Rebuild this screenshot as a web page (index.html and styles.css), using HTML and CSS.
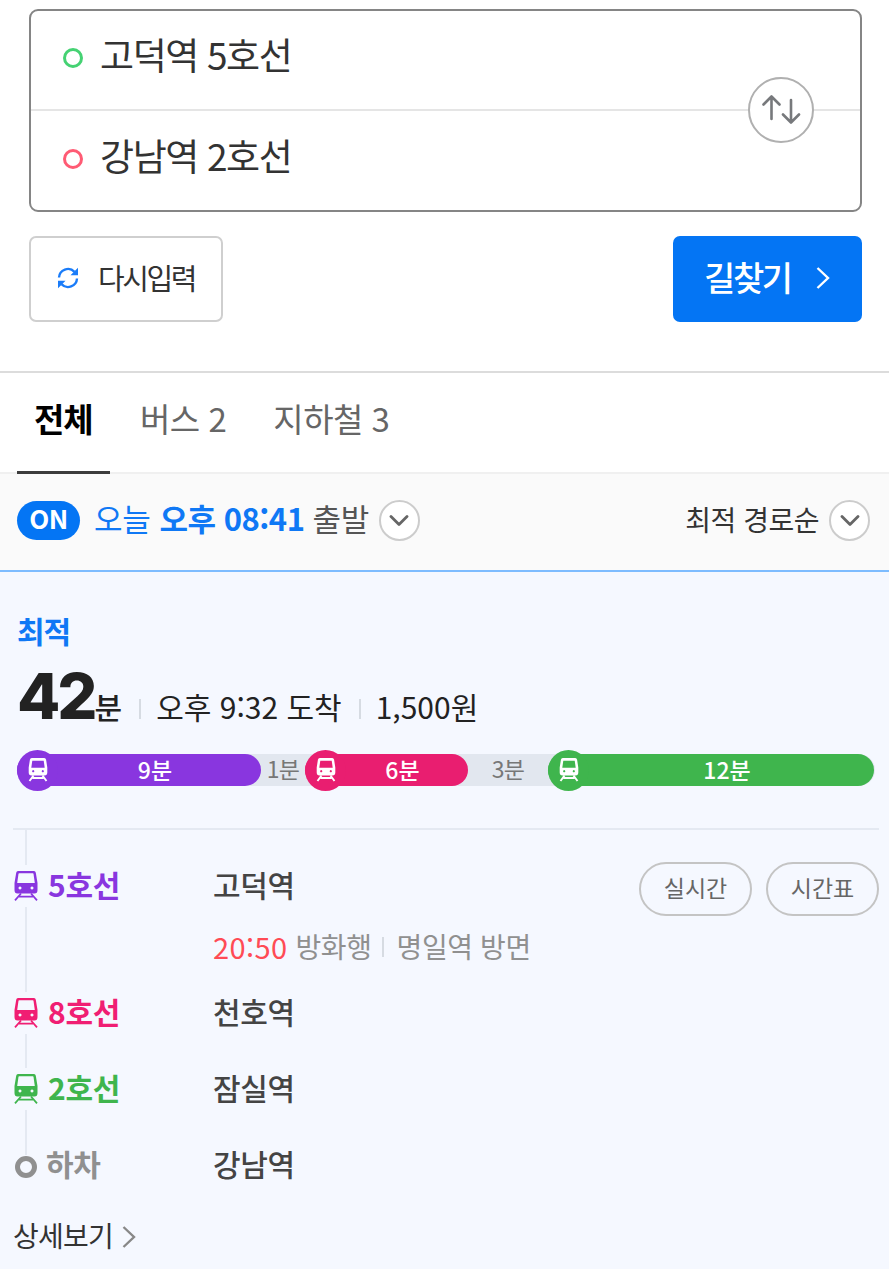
FILE: index.html
```html
<!DOCTYPE html>
<html lang="ko">
<head>
    <meta charset="UTF-8">
    <meta name="viewport" content="width=device-width, initial-scale=1.0">
    <title>길찾기</title>
    <link rel="stylesheet" href="styles.css">
</head>
<body>

  <!-- Shared icons -->
  <svg class="icon-defs" aria-hidden="true">
    <symbol id="train" viewBox="0 0 24 30">
      <path fill="currentColor" fill-rule="evenodd" d="M4 0h16Q21.500 0 21.800 1.800L23.500 12v7Q23.500 22.500 20.500 22.500H3.500Q.5 22.500 .5 19V12L2.200 1.800Q2.500 0 4 0ZM5.200 2.200Q4.600 2.200 4.500 2.800L3.200 12H20.800L19.500 2.800Q19.400 2.200 18.800 2.200ZM6 15.600a1.500 1.500 0 1 0 .01 0ZM18 15.600a1.500 1.500 0 1 0 .01 0Z"/>
      <path fill="none" stroke="currentColor" stroke-width="1.800" d="M7 22.500 1 29.300M17 22.500l6 6.800M5 25.600h14"/>
    </symbol>
    <symbol id="train-small" viewBox="0 0 20 24">
      <path fill="currentColor" fill-rule="evenodd" d="M3.800 0h12.400Q17.800 0 18.100 1.800L19.300 9.500V14.500Q19.300 17.500 16.500 17.500H3.500Q.7 17.500 .7 14.500V9.500L1.900 1.800Q2.200 0 3.800 0ZM4.300 2.700 3.300 9.800H16.700L15.700 2.700ZM5.200 12.100a1.100 1.100 0 1 0 .01 0ZM14.800 12.100a1.100 1.100 0 1 0 .01 0Z"/>
      <path fill="none" stroke="currentColor" stroke-width="1.900" d="M5.500 17.500 1.500 23M14.500 17.500l4 5.500M4.500 20h11"/>
    </symbol>
    <symbol id="down" viewBox="0 0 20 12">
      <path fill="none" stroke="currentColor" stroke-width="2.800" stroke-linecap="round" stroke-linejoin="round" d="M2 1.500 10 9.500 18 1.500"/>
    </symbol>
    <symbol id="right" viewBox="0 0 14 22">
      <path fill="none" stroke="currentColor" stroke-width="2.400" d="M1.500 1 12 11 1.500 21"/>
    </symbol>
  </svg>

  <!-- Search Section -->
  <section class="search">
    <div class="search-box">
      <div class="place">
        <span class="dot dot-start"></span>
        <span>고덕역 5호선</span>
      </div>
      <div class="place">
        <span class="dot dot-end"></span>
        <span>강남역 2호선</span>
      </div>
      <button class="swap" aria-label="출발 도착 변경">
        <svg width="40" height="32" viewBox="0 0 40 32" fill="none" stroke="#77797c" stroke-width="2.600" stroke-linecap="round" stroke-linejoin="round">
          <path d="M10.500 25V3M2.500 10.500l8-8 8 8M30 6v22M22 20.500l8 8 8-8"/>
        </svg>
      </button>
    </div>
    <div class="search-buttons">
      <button class="btn btn-reset">
        <svg width="22" height="22" viewBox="0 0 22 22" fill="none" stroke="#1a7cf9" stroke-width="2.400">
          <path d="M2 10.500A9 9 0 0 1 17.500 4.800M20 11.500A9 9 0 0 1 4.500 17.200"/>
          <path fill="#1a7cf9" stroke="none" d="M21 .8V8.300H13.500ZM1 21.200V13.700H8.500Z"/>
        </svg>
        <span>다시입력</span>
      </button>
      <button class="btn btn-find">
        <span>길찾기</span>
        <svg width="14" height="22"><use href="#right"/></svg>
      </button>
    </div>
  </section>

  <!-- Tabs -->
  <nav class="tabs">
    <a class="tab active">전체</a>
    <a class="tab tab-bus">버스 2</a>
    <a class="tab tab-subway">지하철 3</a>
  </nav>

  <!-- Departure time and sorting -->
  <div class="filter">
    <span class="badge">ON</span>
    <span class="today">오늘</span>
    <b class="time">오후 08:41</b>
    <span class="depart">출발</span>
    <button class="round"><svg width="20" height="12"><use href="#down"/></svg></button>
    <span class="sort">최적 경로순</span>
    <button class="round"><svg width="20" height="12"><use href="#down"/></svg></button>
  </div>

  <!-- Best Route -->
  <main class="route">
    <strong class="best">최적</strong>
    <div class="summary">
      <b class="minutes">42</b>
      <span class="unit">분</span>
      <i class="bar"></i>
      <span class="arrive">오후 9:32 도착</span>
      <i class="bar"></i>
      <span class="price">1,500원</span>
    </div>

    <div class="graph">
      <div class="leg purple" style="width: 244px"><span class="leg-icon"><svg width="20" height="24"><use href="#train-small"/></svg></span><span class="leg-time">9분</span></div>
      <div class="walk" style="width: 44px">1분</div>
      <div class="leg pink" style="width: 163px"><span class="leg-icon"><svg width="20" height="24"><use href="#train-small"/></svg></span><span class="leg-time">6분</span></div>
      <div class="walk" style="width: 80px">3분</div>
      <div class="leg green" style="width: 326px"><span class="leg-icon"><svg width="20" height="24"><use href="#train-small"/></svg></span><span class="leg-time">12분</span></div>
    </div>

    <ul class="stops">
      <li class="stop first">
        <div class="line purple-text"><span class="line-icon"><svg width="24" height="30"><use href="#train"/></svg></span><span>5호선</span></div>
        <div class="station">
          <span>고덕역</span>
          <p class="next"><span class="next-time">20:50</span><span class="toward">방화행</span><i class="bar"></i><span class="toward">명일역 방면</span></p>
        </div>
        <div class="pills">
          <button class="pill">실시간</button>
          <button class="pill">시간표</button>
        </div>
      </li>
      <li class="stop">
        <div class="line pink-text"><span class="line-icon"><svg width="24" height="30"><use href="#train"/></svg></span><span>8호선</span></div>
        <div class="station">천호역</div>
      </li>
      <li class="stop">
        <div class="line green-text"><span class="line-icon"><svg width="24" height="30"><use href="#train"/></svg></span><span>2호선</span></div>
        <div class="station">잠실역</div>
      </li>
      <li class="stop">
        <div class="line gray-text"><span class="line-icon last"><span class="ring"></span></span><span>하차</span></div>
        <div class="station">강남역</div>
      </li>
    </ul>

    <a class="more"><span>상세보기</span><svg width="14" height="22"><use href="#right"/></svg></a>
  </main>

</body>
</html>
```
FILE: styles.css
```css
/* General Page Styling */
* {
  box-sizing: border-box;
}

body {
  font-family: "Noto Sans CJK KR", sans-serif;
  background-color: #fff;
  color: #333;
  margin: 0;
  height: 1269px;
  display: flex;
  flex-direction: column;
  overflow: hidden;
  white-space: nowrap;
}

button {
  font-family: inherit;
  padding: 0;
  margin: 0;
  color: inherit;
}

svg {
  display: block;
  flex: none;
}

.icon-defs {
  position: absolute;
  width: 0;
  height: 0;
}

/* Search Section */
.search {
  height: 371px;
  padding: 9px 27px 0 29px;
}

.search-box {
  position: relative;
  height: 203px;
  border: 2px solid #858585;
  border-radius: 9px;
}

.place {
  height: 100px;
  padding: 0 0 13px 32px;
  display: flex;
  align-items: center;
  gap: 17px;
  font-size: 37px;
  letter-spacing: -1.4px;
}

.place:first-child {
  border-bottom: 2px solid #e5e5e5;
}

.dot {
  width: 20px;
  height: 20px;
  border: 3px solid #45d273;
  border-radius: 50%;
  margin-top: 8px;
}

.dot-end {
  border-color: #ff5b74;
}

.swap {
  position: absolute;
  right: 46px;
  top: 66px;
  width: 66px;
  height: 66px;
  border: 2px solid #b0b0b0;
  border-radius: 50%;
  background: #fff;
  display: flex;
  align-items: center;
  justify-content: center;
}

.search-buttons {
  margin-top: 24px;
  display: flex;
  justify-content: space-between;
}

.btn {
  height: 86px;
  display: flex;
  align-items: center;
  border-radius: 7px;
}

.btn span {
  padding-bottom: 5px;
}

.btn svg {
  margin-top: -2px;
}

.btn-reset {
  width: 194px;
  padding-left: 26px;
  gap: 19px;
  border: 2px solid #cfcfcf;
  background: #fff;
  font-size: 29px;
  letter-spacing: -2.4px;
}

.btn-find {
  width: 189px;
  padding-left: 31px;
  gap: 25px;
  border: none;
  background: #0475f4;
  color: #fff;
  font-size: 34px;
  font-weight: 500;
  letter-spacing: -2.4px;
}

/* Tabs */
.tabs {
  height: 103px;
  padding-left: 17px;
  display: flex;
  border-top: 2px solid #dcdcdc;
  border-bottom: 2px solid #f0f0f0;
  font-size: 33px;
  line-height: 90px;
  letter-spacing: -0.5px;
  color: #666;
}

.tab {
  height: 101px;
}

.tab.active {
  width: 93px;
  padding-left: 17px;
  border-bottom: 3px solid #3c3c3c;
  font-weight: bold;
  letter-spacing: -1.2px;
  color: #000;
}

.tab-bus {
  margin-left: 30px;
}

.tab-subway {
  margin-left: 47px;
}

/* Departure time and sorting */
.filter {
  height: 98px;
  padding: 0 19px 0 17px;
  display: flex;
  align-items: center;
  background: #fafafa;
  border-bottom: 2px solid #7dbcff;
  font-size: 31px;
  line-height: 46px;
}

.filter > * {
  margin-bottom: 4px;
}

.badge {
  width: 63px;
  height: 39px;
  line-height: 34px;
  border-radius: 20px;
  background: #0475f4;
  color: #fff;
  font-size: 26px;
  font-weight: bold;
  letter-spacing: -0.5px;
  text-align: center;
}

.today, .time, .depart {
  padding-bottom: 5px;
}

.today {
  margin-left: 14px;
  letter-spacing: -0.3px;
  color: #0f78f5;
}

.time {
  margin-left: 9px;
  letter-spacing: -0.5px;
  color: #0f78f5;
}

.depart {
  margin-left: 8px;
  letter-spacing: -0.3px;
  color: #555;
}

.round {
  width: 41px;
  height: 41px;
  margin-left: 10px;
  border: 2px solid #ccc;
  border-radius: 50%;
  background: #fff;
  color: #666;
  display: flex;
  align-items: center;
  justify-content: center;
}

.round svg {
  margin-top: 2px;
}

.sort {
  margin-left: auto;
  padding-bottom: 3px;
  font-size: 28px;
  letter-spacing: -0.5px;
}

/* Best Route */
.route {
  flex: 1;
  padding: 34px 10px 0 13px;
  background: #f5f8ff;
}

.best {
  display: block;
  padding-left: 4px;
  font-size: 30px;
  line-height: 48px;
  letter-spacing: -1px;
  color: #0f78f5;
}

.summary {
  height: 70px;
  margin-top: 7px;
  padding-left: 4px;
  display: flex;
  align-items: baseline;
  font-size: 30px;
  line-height: 70px;
  color: #222;
}

.minutes {
  font-family: Inter, sans-serif;
  font-size: 63px;
  font-weight: 800;
  letter-spacing: -3px;
}

.unit {
  font-weight: 500;
}

.bar {
  width: 2px;
  height: 20px;
  background: #d6dbe2;
}

.summary .bar {
  margin: 0 15px 0 17px;
}

/* Time graph */
.graph {
  height: 32px;
  margin: 23px 4px 0;
  display: flex;
  border-radius: 16px;
  background: #e2e7ef;
  font-size: 23px;
  line-height: 28px;
}

.leg {
  display: flex;
  align-items: center;
  border-radius: 16px;
  color: #fff;
  font-weight: 500;
}

.leg-icon {
  width: 41px;
  height: 41px;
  border-radius: 50%;
  display: flex;
  align-items: center;
  justify-content: center;
  flex: none;
}

.leg-time {
  flex: 1;
  padding: 0 9px 3px 0;
  text-align: center;
}

.walk {
  text-align: center;
  letter-spacing: -0.8px;
  color: #777;
}

.purple, .purple .leg-icon {
  background: #8936df;
}

.pink, .pink .leg-icon {
  background: #e91e70;
}

.green, .green .leg-icon {
  background: #3fb54d;
}

/* Stops */
.stops {
  position: relative;
  list-style-type: none;
  margin: 42px 0 0;
  padding: 18px 0 0;
  border-top: 2px solid #e4e9f2;
  font-size: 30px;
  letter-spacing: -0.3px;
}

.stops::before {
  content: "";
  position: absolute;
  left: 12px;
  top: 0;
  width: 2px;
  height: 326px;
  background: #e4e9f2;
}

.stop {
  height: 76px;
  display: grid;
  grid-template-columns: 200px 1fr auto;
  line-height: 72px;
}

.stop.first {
  height: 127px;
}

.line {
  position: relative;
  height: 76px;
  display: flex;
  align-items: center;
  font-weight: bold;
  line-height: 72px;
}

.line > span:last-child {
  margin: -4px 0 0 10px;
}

.gray-text > span:last-child {
  margin-left: 8px;
}

.line-icon {
  width: 25px;
  height: 42px;
  background: #f5f8ff;
  display: flex;
  align-items: center;
  justify-content: center;
}

.line-icon.last {
  height: 24px;
  margin-top: 3px;
}

.ring {
  width: 22px;
  height: 22px;
  border: 5px solid #909090;
  border-radius: 50%;
}

.purple-text {
  color: #8936df;
}

.pink-text {
  color: #f01e73;
}

.green-text {
  color: #3fb54d;
}

.gray-text {
  color: #909090;
}

.station {
  font-weight: 500;
  color: #444;
}

.next {
  margin: 0;
  height: 51px;
  display: flex;
  align-items: center;
  font-size: 28px;
  font-weight: normal;
  line-height: 50px;
  letter-spacing: -0.4px;
  color: #909090;
}

.next-time {
  margin-right: 8px;
  font-size: 29px;
  letter-spacing: 0.4px;
  color: #ff4b55;
}

.next .bar {
  margin: 2px 13px 0 10px;
}

.pills {
  padding-top: 14px;
  display: flex;
  gap: 14px;
}

.pill {
  width: 113px;
  height: 54px;
  padding-bottom: 4px;
  border: 2px solid #c4c4c4;
  border-radius: 27px;
  background: transparent;
  color: #666;
  font-size: 23px;
}

/* Detail link */
.more {
  display: flex;
  align-items: center;
  gap: 9px;
  margin-top: 11px;
  font-size: 28px;
  line-height: 42px;
  letter-spacing: -0.8px;
}

.more span {
  padding-bottom: 4px;
}

.more svg {
  color: #888;
}
```
